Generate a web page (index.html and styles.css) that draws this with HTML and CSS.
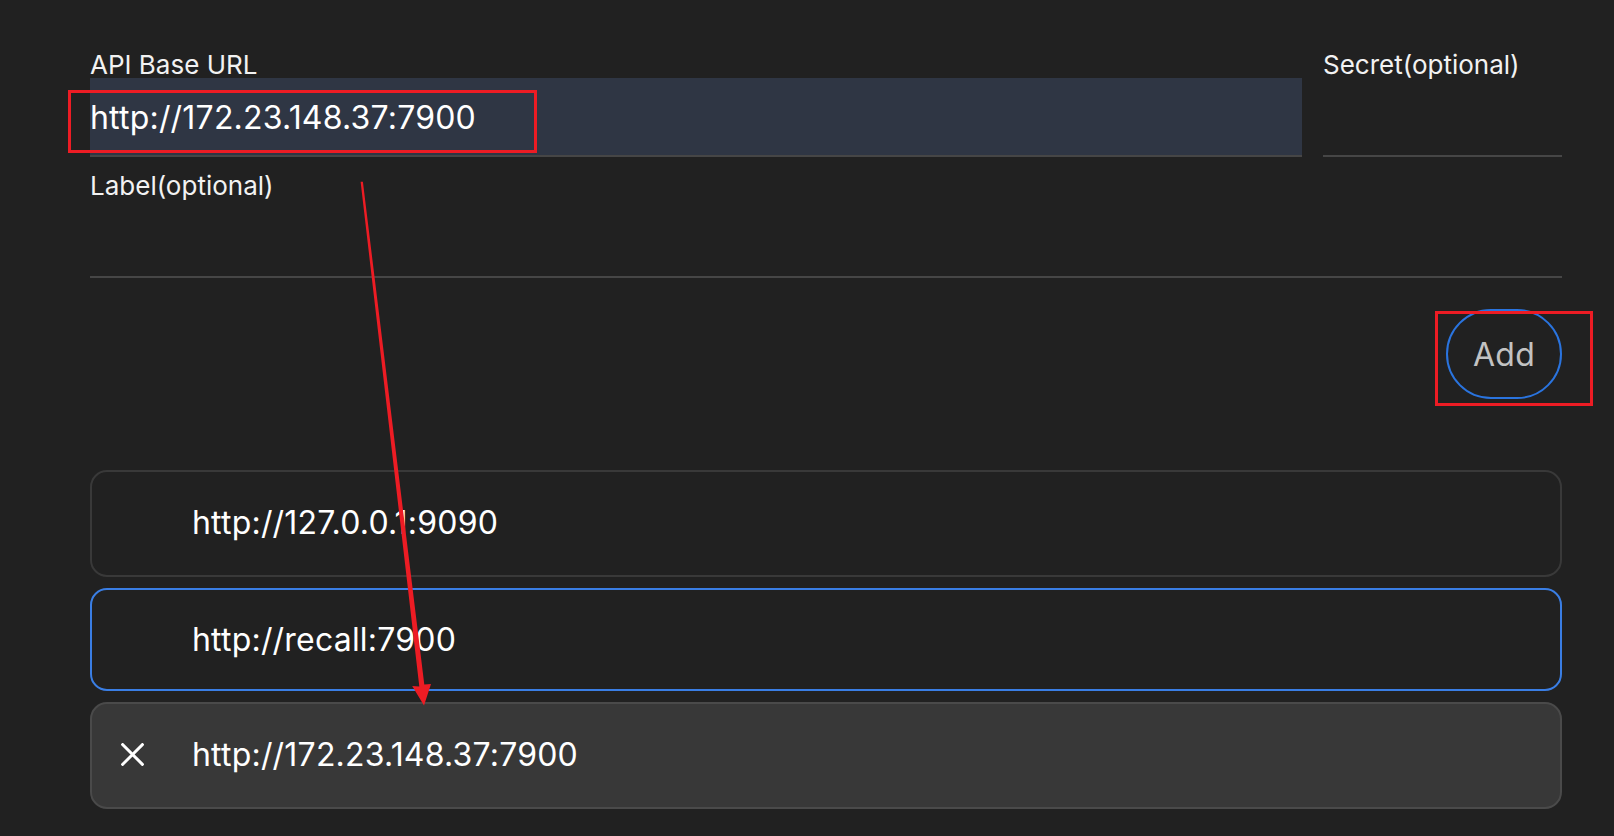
FILE: index.html
```html
<!DOCTYPE html>
<html lang="en">
<head>
<meta charset="utf-8">
<title>Backend settings</title>
<link rel="stylesheet" href="styles.css">
</head>
<body>
<div class="page">
  <div class="row">
    <div class="field field-grow">
      <div class="field-label">API Base URL</div>
      <div class="field-input is-focused">http://172.23.148.37:7900</div>
    </div>
    <div class="field field-secret">
      <div class="field-label">Secret(optional)</div>
      <div class="field-input"></div>
    </div>
  </div>
  <div class="row row-second">
    <div class="field field-grow">
      <div class="field-label">Label(optional)</div>
      <div class="field-input"></div>
    </div>
  </div>
  <div class="actions">
    <button class="add-btn">Add</button>
  </div>
  <ul class="backend-list">
    <li class="backend-item item-plain"><span class="item-icon"></span><span class="item-text">http://127.0.0.1:9090</span></li>
    <li class="backend-item item-selected"><span class="item-icon"></span><span class="item-text">http://recall:7900</span></li>
    <li class="backend-item item-hover">
      <span class="item-icon">
        <svg width="23" height="23" viewBox="0 0 23 23"><path d="M1.6 1.6 L21.4 21.4 M21.4 1.6 L1.6 21.4" stroke="#ffffff" stroke-width="2.9" stroke-linecap="square" fill="none"/></svg>
      </span>
      <span class="item-text">http://172.23.148.37:7900</span>
    </li>
  </ul>
</div>

<div class="annot annot-url"></div>
<div class="annot annot-add"></div>
<svg class="annot-arrow" width="1614" height="836" viewBox="0 0 1614 836">
  <polygon fill="#ed1c24" points="360.6,181.7 362.9,181.7 424.3,684.5 431,684 424,705.5 412.2,686 419.3,686.5"/>
</svg>
</body>
</html>
```

FILE: styles.css
```css
html, body {
  margin: 0;
  padding: 0;
  background: #212121;
}

body {
  width: 1614px;
  height: 836px;
  position: relative;
  overflow: hidden;
  font-family: "Inter", "Roboto", "Noto Sans", sans-serif;
  color: #f5f5f5;
}

.page {
  padding: 52px 52px 0 90px;
}

.row {
  display: flex;
  gap: 21px;
}

.row-second {
  margin-top: 16px;
}

.field {
  display: flex;
  flex-direction: column;
}

.field-grow {
  flex: 1;
}

.field-secret {
  width: 239px;
}

.field-label {
  font-size: 26px;
  line-height: 26px;
  height: 26px;
  color: #f2f2f2;
  white-space: nowrap;
}

.field-input {
  height: 77px;
  line-height: 79px;
  border-bottom: 2px solid #464646;
  font-size: 32px;
  letter-spacing: 0.2px;
  color: #ffffff;
  white-space: nowrap;
}

.field-input.is-focused {
  background: #2f3644;
}

.actions {
  display: flex;
  justify-content: flex-end;
  margin-top: 31px;
}

.add-btn {
  width: 116px;
  height: 90px;
  border: 2px solid #2a74df;
  border-radius: 45px;
  background: transparent;
  color: #c2c2c2;
  font-family: "Inter", "Roboto", sans-serif;
  font-size: 32px;
  letter-spacing: 0.2px;
  padding: 0;
}

.backend-list {
  list-style: none;
  margin: 71px 0 0 0;
  padding: 0;
  display: flex;
  flex-direction: column;
}

.backend-item {
  display: flex;
  align-items: center;
  box-sizing: border-box;
  border-radius: 17px;
  padding-left: 29px;
  font-size: 32px;
  letter-spacing: 0.2px;
  color: #ffffff;
}

.item-icon {
  width: 23px;
  height: 23px;
  display: flex;
  margin-right: 48px;
}

.item-text {
  white-space: nowrap;
}

.item-plain {
  height: 107px;
  border: 2px solid #393939;
  padding-bottom: 3px;
}

.item-selected {
  height: 103px;
  margin-top: 11px;
  border: 2px solid #3a7ee4;
}

.item-hover {
  height: 107px;
  margin-top: 11px;
  background: #383838;
  border: 2px solid #4a4a4a;
  padding-bottom: 3px;
}

.annot {
  position: absolute;
  box-sizing: border-box;
  border: 3.5px solid #ed1c24;
}

.annot-url {
  left: 68px;
  top: 90px;
  width: 469px;
  height: 63px;
}

.annot-add {
  left: 1435px;
  top: 311px;
  width: 158px;
  height: 95px;
}

.annot-arrow {
  position: absolute;
  left: 0;
  top: 0;
  pointer-events: none;
}
```
